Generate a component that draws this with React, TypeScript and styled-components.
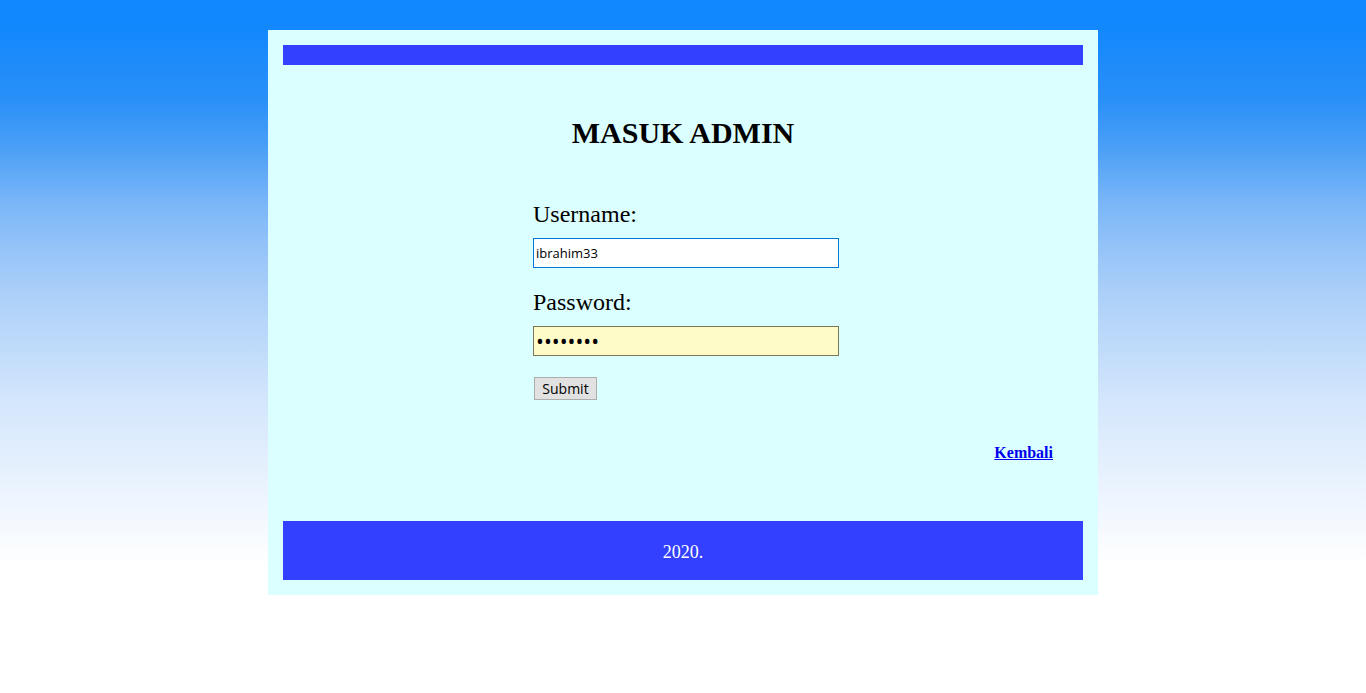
import React from 'react';
import styled, { createGlobalStyle } from 'styled-components';

const GlobalStyle = createGlobalStyle`
  html, body {
    margin: 0;
    padding: 0;
    background: #ffffff;
  }
`;

const Page = styled.div`
  min-height: 693px;
  padding-top: 30px;
  box-sizing: border-box;
  font-family: 'Liberation Serif', 'Times New Roman', serif;
  background: linear-gradient(
    to bottom,
    #1188ff 0px,
    #1388fd 30px,
    #2a90f8 100px,
    #4ca0f6 150px,
    #78b5f8 200px,
    #96c4f8 250px,
    #aed1f9 300px,
    #d3e6fc 400px,
    #eef5fe 500px,
    #ffffff 567px,
    #ffffff 100%
  );
`;

const Container = styled.div`
  width: 800px;
  margin: 0 auto;
  padding: 15px;
  background: #dbffff;
`;

const Bar = styled.div<{ $height: number }>`
  height: ${(p) => p.$height}px;
  background: #3340ff;
  display: flex;
  align-items: center;
  justify-content: center;
  color: #ffffff;
  font-size: 18px;
  padding-top: ${(p) => (p.$height > 30 ? 3 : 0)}px;
  box-sizing: border-box;
`;

const Title = styled.h1`
  margin: 51px 0 0;
  text-align: center;
  font-size: 30px;
  font-weight: bold;
  line-height: 34px;
  color: #000;
`;

const Form = styled.form`
  display: flex;
  flex-direction: column;
  align-items: flex-start;
  padding-left: 250px;
  margin-top: 50px;
`;

const Label = styled.label<{ $top: number }>`
  font-size: 24px;
  line-height: 28px;
  margin-top: ${(p) => p.$top}px;
  color: #000;
`;

const Input = styled.input<{ $autofill?: boolean }>`
  box-sizing: border-box;
  width: 306px;
  height: 30px;
  margin-top: 10px;
  padding: 0 2px;
  border: 1px solid ${(p) => (p.$autofill ? '#7f7658' : '#0078d7')};
  background: ${(p) => (p.$autofill ? '#fffbc8' : '#ffffff')};
  font-family: 'Open Sans', 'DejaVu Sans', sans-serif;
  font-size: ${(p) => (p.$autofill ? '21px' : '13px')};
  color: #000;
  outline: none;
  border-radius: 0;
`;

const Button = styled.button`
  margin: 21px 0 0 1px;
  width: 63px;
  height: 23px;
  padding: 0;
  background: #e1e1e1;
  border: 1px solid #adadad;
  border-radius: 0;
  font-family: 'Open Sans', 'DejaVu Sans', sans-serif;
  font-size: 14px;
  color: #000;
`;

const BackRow = styled.div`
  display: flex;
  justify-content: flex-end;
  padding-right: 30px;
  margin-top: 44px;
  margin-bottom: 59px;
`;

const BackLink = styled.a`
  font-size: 16px;
  font-weight: bold;
  line-height: 18px;
  color: #0000ee;
  text-decoration: underline;
`;

const App = () => (
  <Page>
    <GlobalStyle />
    <Container>
      <Bar $height={20} />
      <Title>MASUK ADMIN</Title>
      <Form onSubmit={(e) => e.preventDefault()}>
        <Label $top={0}>Username:</Label>
        <Input type="text" defaultValue="ibrahim33" />
        <Label $top={20}>Password:</Label>
        <Input $autofill type="password" defaultValue="ibrahim1" />
        <Button type="submit">Submit</Button>
      </Form>
      <BackRow>
        <BackLink href="#">Kembali</BackLink>
      </BackRow>
      <Bar $height={59}>2020.</Bar>
    </Container>
  </Page>
);

export default App;
